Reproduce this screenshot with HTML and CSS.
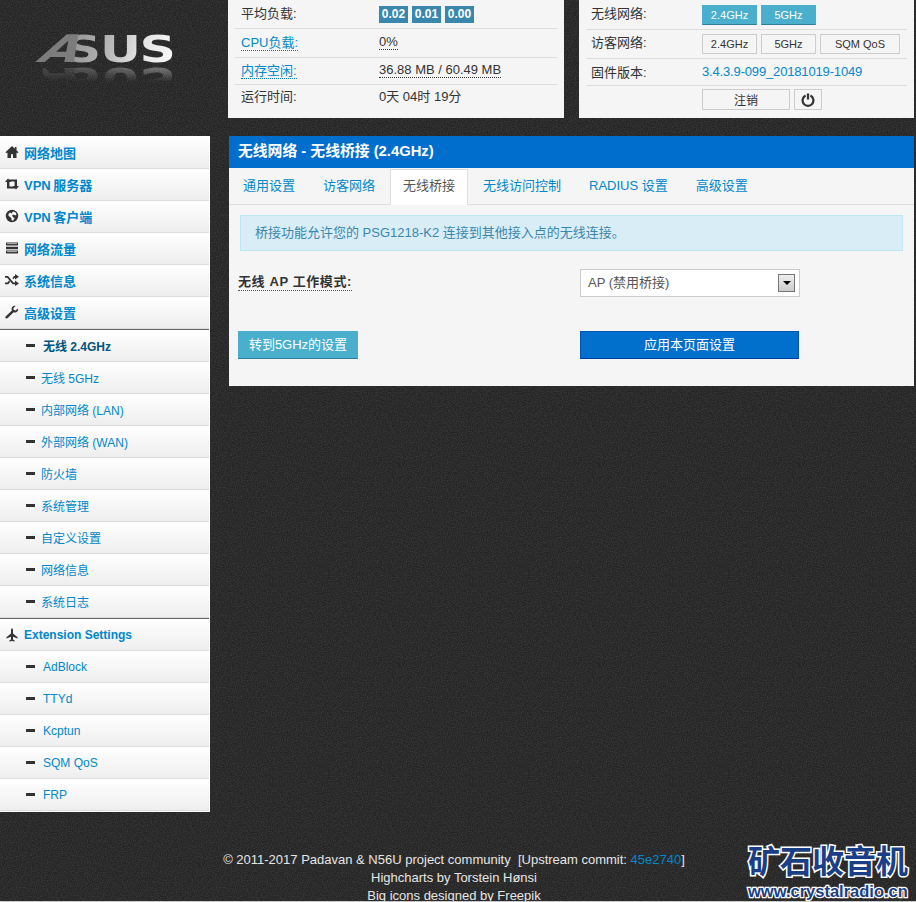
FILE: index.html
```html
<!DOCTYPE html>
<html lang="zh">
<head>
<meta charset="utf-8">
<title>无线桥接</title>
<link rel="stylesheet" href="styles.css">
</head>
<body>
<div class="page">
  <header class="top">
    <div class="logo">
      <div class="logo-mark"><span class="logo-a">A</span><span class="logo-sus">SUS</span></div>
    </div>
    <section class="status status-left">
      <div class="row"><span class="cell-label">平均负载:</span><span class="cell-value"><span class="badge">0.02</span><span class="badge">0.01</span><span class="badge">0.00</span></span></div>
      <div class="row row-tall"><span class="cell-label"><a class="dotted link">CPU负载:</a></span><span class="cell-value"><span class="dotted dark">0%</span></span></div>
      <div class="row row-mem"><span class="cell-label"><a class="dotted link">内存空闲:</a></span><span class="cell-value"><span class="dotted dark">36.88 MB / 60.49 MB</span></span></div>
      <div class="row row-last"><span class="cell-label">运行时间:</span><span class="cell-value">0天 04时 19分</span></div>
    </section>
    <section class="status status-right">
      <div class="row"><span class="cell-label">无线网络:</span><span class="btns"><span class="btn btn-info w55">2.4GHz</span><span class="btn btn-info w55">5GHz</span></span></div>
      <div class="row row-tall"><span class="cell-label">访客网络:</span><span class="btns"><span class="btn w55">2.4GHz</span><span class="btn w55">5GHz</span><span class="btn w80">SQM QoS</span></span></div>
      <div class="row row-mem"><span class="cell-label">固件版本:</span><span class="cell-value"><a class="link firmware">3.4.3.9-099_20181019-1049</a></span></div>
      <div class="row row-last"><span class="cell-label"></span><span class="btns"><span class="btn btn-big w88">注销</span><span class="btn btn-big w28"><svg class="power" viewBox="0 0 14 14"><path d="M4.6 2.6A5.4 5.4 0 1 0 9.4 2.6" fill="none" stroke="#333" stroke-width="2.2"/><rect x="5.9" y="0.5" width="2.2" height="6" fill="#333"/></svg></span></span></div>
    </section>
  </header>

  <div class="body">
    <nav class="sidebar">
      <a class="item"><svg class="ico" viewBox="0 0 14 14"><path d="M7 1 0.5 7.2 1.6 8.2 2.5 7.4V13H6V9.2H8V13H11.5V7.4L12.4 8.2 13.5 7.2 11.5 5.3V2H9.8V3.7z"/></svg>网络地图</a>
      <a class="item"><svg class="ico" viewBox="0 0 14 14"><path d="M0 5 3 1.5 6 5H4.4V9.5H8.5L10.5 11.5H2V5zM14 9 11 12.5 8 9H9.6V4.5H5.5L3.5 2.5H12V9z"/></svg>VPN 服务器</a>
      <a class="item"><svg class="ico" viewBox="0 0 14 14"><path fill-rule="evenodd" d="M7 .8a6.2 6.2 0 1 0 0 12.4A6.2 6.2 0 0 0 7 .8zM8 2.6 10.4 3.2 11.6 5.4 10.2 6.4 8.6 5.4 7 6.6 8.2 8.6 9.6 8.8 8.4 11.4 6.8 11.6 6.2 8.8 3.6 7 3.4 5 5.2 3.4 6.6 4.4z"/></svg>VPN 客户端</a>
      <a class="item"><svg class="ico" viewBox="0 0 14 14"><path d="M1 1.5H13V4.5H1zM1 5.7H13V8.3H1zM1 9.5H13V12.5H1z"/><path d="M2 2.6H12M2 10.6H12" stroke="#eee" stroke-width=".7"/></svg>网络流量</a>
      <a class="item"><svg class="ico" viewBox="0 0 14 14"><path d="M0 3H3L8.5 9.5H10V7.6L14 10.4 10 13V11.2H7.6L2.2 4.8H0zM0 9.5H2.4L4 7.6 5.2 9 3.2 11.2H0zM7.4 5 9 3H10V1L14 3.8 10 6.5V4.8H9.6L8.6 6.2z"/></svg>系统信息</a>
      <a class="item"><svg class="ico" viewBox="0 0 14 14"><path d="M13 3.4 10.6 5.6 8.8 5 8.3 3.2 10.6 1C8.7.2 6.5 1.6 6.6 4 6.6 4.6 6.7 5 6.9 5.4L.9 11.2C.2 11.9.2 12.6.8 13.2 1.4 13.8 2.1 13.7 2.7 13.1L8.6 7.2C11 8.2 13.9 6 13 3.4z"/></svg>高级设置</a>
      <div class="rule"></div>
      <a class="sub current"><span class="dash"></span>无线 2.4GHz</a>
      <a class="sub"><span class="dash"></span>无线 5GHz</a>
      <a class="sub"><span class="dash"></span>内部网络 (LAN)</a>
      <a class="sub"><span class="dash"></span>外部网络 (WAN)</a>
      <a class="sub"><span class="dash"></span>防火墙</a>
      <a class="sub"><span class="dash"></span>系统管理</a>
      <a class="sub"><span class="dash"></span>自定义设置</a>
      <a class="sub"><span class="dash"></span>网络信息</a>
      <a class="sub"><span class="dash"></span>系统日志</a>
      <div class="rule"></div>
      <a class="item item-ext"><svg class="ico" viewBox="0 0 14 14"><path d="M7 .3C7.7.3 8 1.4 8 2.8V5.6L12.6 9.2V10.6L8 8.8V11.4L9.6 12.6V13.6L7 12.9 4.4 13.6V12.6L6 11.4V8.8L1.4 10.6V9.2L6 5.6V2.8C6 1.4 6.3.3 7 .3z"/></svg>Extension Settings</a>
      <a class="sub latin"><span class="dash"></span>AdBlock</a>
      <a class="sub latin"><span class="dash"></span>TTYd</a>
      <a class="sub latin"><span class="dash"></span>Kcptun</a>
      <a class="sub latin"><span class="dash"></span>SQM QoS</a>
      <a class="sub latin"><span class="dash"></span>FRP</a>
    </nav>

    <main class="panel">
      <h1 class="panel-title">无线网络 - 无线桥接 (2.4GHz)</h1>
      <ul class="tabs">
        <li class="tab">通用设置</li>
        <li class="tab">访客网络</li>
        <li class="tab active">无线桥接</li>
        <li class="tab">无线访问控制</li>
        <li class="tab">RADIUS 设置</li>
        <li class="tab">高级设置</li>
      </ul>
      <div class="alert">桥接功能允许您的 PSG1218-K2 连接到其他接入点的无线连接。</div>
      <div class="form-row">
        <div class="form-left"><span class="form-label">无线 AP 工作模式:</span></div>
        <div class="select"><span>AP (禁用桥接)</span><span class="arrow"></span></div>
      </div>
      <div class="actions">
        <div class="form-left"><button class="action action-info">转到5GHz的设置</button></div>
        <button class="action action-primary">应用本页面设置</button>
      </div>
    </main>
  </div>

  <footer class="footer">
    <div>© 2011-2017 Padavan &amp; N56U project community&nbsp; [Upstream commit: <a class="commit">45e2740</a>]</div>
    <div>Highcharts by Torstein Hønsi</div>
    <div>Big icons designed by Freepik</div>
  </footer>

  <div class="stamp">
    <div class="stamp-cn">矿石收音机</div>
    <div class="stamp-en">www.crystalradio.cn</div>
  </div>
</div>
</body>
</html>
```

FILE: styles.css
```css
* { box-sizing: border-box; }
html, body { margin: 0; padding: 0; }
body {
  font-family: "Liberation Sans", "Noto Sans CJK SC", sans-serif;
  font-size: 13px;
  color: #333;
  background: #262626;
}
a { color: inherit; text-decoration: none; }

.page {
  position: relative;
  width: 916px;
  height: 902px;
  overflow: hidden;
  border-bottom: 1px solid #c8c8c8;
  background-color: #242424;
  background-image: url("data:image/svg+xml,%3Csvg xmlns='http://www.w3.org/2000/svg' width='200' height='200'%3E%3Cfilter id='n' x='0' y='0' width='100%25' height='100%25'%3E%3CfeTurbulence type='fractalNoise' baseFrequency='.8' numOctaves='2' stitchTiles='stitch'/%3E%3CfeColorMatrix values='0 0 0 0 .5 0 0 0 0 .5 0 0 0 0 .5 .3 0 0 0 -.1'/%3E%3C/filter%3E%3Crect width='200' height='200' filter='url(%23n)'/%3E%3C/svg%3E");
}

/* top */
.top { display: flex; height: 118px; margin-bottom: 18px; }
.logo { width: 228px; flex: none; padding: 34px 0 0 43px; }
.logo-mark {
  width: 104px;
  height: 31px;
  font-family: "DejaVu Sans", sans-serif;
  font-weight: 700;
  font-size: 38px;
  line-height: 31px;
  white-space: nowrap;
  transform-origin: 0 0;
  transform: scaleX(1.33);
  -webkit-box-reflect: below 0 linear-gradient(transparent 45%, rgba(255,255,255,.45));
}
.logo-a {
  display: inline-block;
  margin-right: -13px;
  color: #7c7c7c;
  transform: skewX(-26deg);
}
.logo-sus {
  display: inline-block;
  letter-spacing: -1px;
  color: transparent;
  background: linear-gradient(100deg, #8e8e8e 0%, #b5b5b5 40%, #e0e0e0 65%, #fafafa 100%);
  -webkit-background-clip: text;
  background-clip: text;
}

.status { height: 118px; background: #f5f5f5; flex: none; }
.status-left { width: 336px; padding: 0 7px; margin-right: 15px; }
.status-right { width: 335px; padding: 1px 7px 0; }
.row { display: flex; align-items: center; height: 29px; border-bottom: 1px solid #ddd; padding-left: 6px; }
.row-tall { height: 29px; }
.row-mem { height: 27px; }
.row-last { height: 27px; border-bottom: 0; }
.cell-label { width: 138px; flex: none; padding-bottom: 3px; }
.cell-value { padding-bottom: 3px; }
.row-last .cell-label, .row-last .cell-value { padding-bottom: 6px; }
.status-right .row { padding-left: 5px; }
.status-right .cell-label { width: 111px; padding-bottom: 5px; }
.status-right .row-mem .cell-label, .status-right .row-mem .cell-value { padding-bottom: 2px; }
.badge {
  display: inline-block;
  width: 29px;
  height: 17px;
  margin: 3px 4px 0 0;
  background: #3a87ad;
  color: #fff;
  font-size: 12px;
  font-weight: 700;
  line-height: 17px;
  text-align: center;
  vertical-align: top;
}
.link { color: #0088cc; }
.firmware { letter-spacing: -.16px; }
.dotted { border-bottom: 1px dotted #0077bb; padding-bottom: 0; }
.dotted.dark { border-bottom-color: #333; }

.btns { display: flex; gap: 4px; }
.btn {
  display: flex;
  align-items: center;
  justify-content: center;
  height: 20px;
  border: 1px solid #ccc;
  background: #f5f5f5;
  color: #333;
  font-size: 11px;
}
.btn-info { background: #49afcd; border-color: #49afcd #49afcd #2f7f98; color: #fff; }
.btn-big { height: 21px; font-size: 12px; }
.w55 { width: 55px; }
.w80 { width: 80px; }
.w88 { width: 88px; }
.w28 { width: 28px; }
.power { width: 14px; height: 14px; }

/* body */
.body { display: flex; align-items: flex-start; }
.sidebar {
  width: 210px;
  flex: none;
  margin-right: 19px;
  padding: 1px 1px 1px 0;
  background: #fff;
}
.item, .sub {
  display: flex;
  align-items: center;
  height: 32px;
  padding-bottom: 1px;
  border-bottom: 1px solid #ddd;
  background: linear-gradient(#fff, #eee);
  color: #0088cc;
}
.item { font-weight: 700; font-size: 13px; padding-left: 5px; word-spacing: -1px; }
.item-ext { font-size: 12px; word-spacing: 0; padding-bottom: 0; }
.ico { width: 14px; height: 14px; margin-right: 5px; fill: #333; flex: none; }
.sub { font-size: 12px; padding-left: 26px; }
.dash { width: 9px; height: 3px; background: #333; margin-right: 6px; flex: none; }
.sub.latin { padding-bottom: 0; }
.latin .dash { margin-right: 8px; }
.current { color: #005580; font-weight: 700; }
.current .dash { margin-right: 8px; }
.rule { height: 1px; background: #666; }

.panel { width: 685px; height: 250px; background: #f5f5f5; }
.panel-title {
  margin: 0;
  height: 32px;
  padding-left: 9px;
  background: #006ecd;
  color: #fff;
  font-size: 14.8px;
  font-weight: 700;
  line-height: 31px;
}
.tabs {
  display: flex;
  gap: 2px;
  height: 37px;
  margin: 0;
  padding: 1px 0 0 1px;
  list-style: none;
  border-bottom: 1px solid #ddd;
}
.tab {
  height: 36px;
  padding: 0 12px;
  color: #0088cc;
  line-height: 32px;
  border: 1px solid transparent;
  border-bottom: 0;
}
.tab.active { background: #fff; color: #555; border-color: #ddd; }
.alert {
  height: 36px;
  margin: 10px 11px 0;
  padding-left: 14px;
  background: #d9edf7;
  border: 1px solid #bce8f1;
  color: #3a87ad;
  line-height: 33px;
}
.form-row, .actions { display: flex; align-items: center; padding-left: 9px; }
.form-row { margin-top: 18px; height: 28px; }
.actions { margin-top: 34px; height: 28px; }
.form-left { width: 342px; flex: none; }
.form-label {
  font-weight: 700;
  letter-spacing: .6px;
  border-bottom: 1px dotted #555;
  padding-bottom: 0;
  display: inline-block;
  margin-bottom: 4px;
}
.select {
  position: relative;
  width: 220px;
  height: 28px;
  padding-left: 7px;
  background: #fff;
  border: 1px solid #ccc;
  color: #555;
  line-height: 26px;
}
.arrow {
  position: absolute;
  top: 4px;
  right: 4px;
  width: 17px;
  height: 18px;
  border: 1px solid #777;
  background: linear-gradient(#eee, #ccc);
}
.arrow::after {
  content: "";
  position: absolute;
  left: 4px;
  top: 6px;
  border: 4px solid transparent;
  border-top: 4px solid #000;
  border-bottom: 0;
}
.action {
  display: block;
  height: 28px;
  padding: 0 0 4px;
  color: #fff;
  font: 13px "Liberation Sans", "Noto Sans CJK SC", sans-serif;
  border: 1px solid;
}
.action-info { width: 120px; background: #49afcd; border-color: #49afcd #49afcd #2f7f98; }
.action-primary { width: 219px; background: #0070cc; border-color: #0055b3 #0055b3 #003fa0; }

/* footer */
.footer {
  margin-top: 39px;
  width: 908px;
  color: #e6e6e6;
  font-size: 13px;
  line-height: 18px;
  text-align: center;
}
.commit { color: #0088cc; }

.stamp { position: absolute; left: 748px; top: 841px; width: 165px; }
.stamp-cn {
  font-family: "Noto Sans CJK SC", sans-serif;
  font-size: 32px;
  font-weight: 700;
  line-height: 36px;
  color: #1b3f86;
  -webkit-text-stroke: 3px #fff;
  paint-order: stroke fill;
}
.stamp-en {
  font-size: 16.5px;
  font-weight: 700;
  line-height: 20px;
  margin-top: 4px;
  color: #1b3f86;
  -webkit-text-stroke: 2.5px #fff;
  paint-order: stroke fill;
  white-space: nowrap;
}
```
